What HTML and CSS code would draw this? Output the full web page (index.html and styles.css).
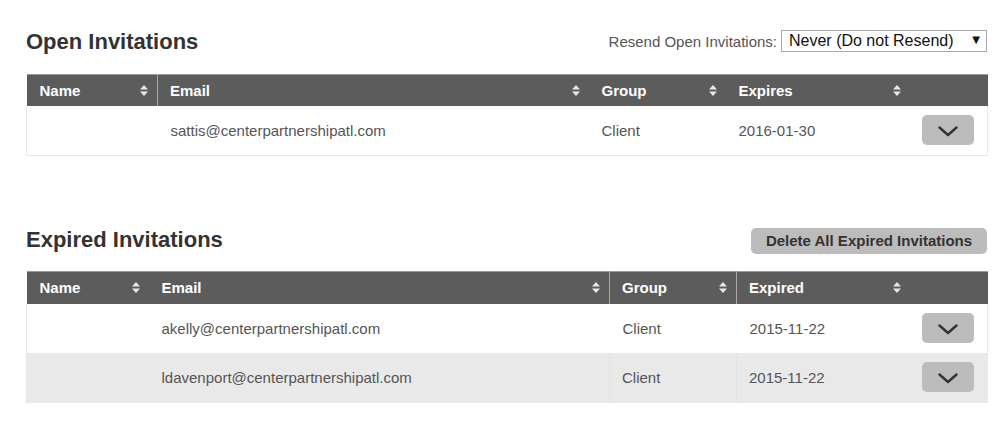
FILE: index.html
```html
<!DOCTYPE html>
<html>
<head>
<meta charset="utf-8">
<link rel="stylesheet" href="styles.css">
</head>
<body>
<div class="page">
  <div class="section-head first">
    <h2 class="title">Open Invitations</h2>
    <div class="resend">
      <label class="resend-label">Resend Open Invitations:</label>
      <span class="select-wrap">
        <select class="select"><option>Never (Do not Resend)</option></select>
        <span class="select-arrow">&#9660;</span>
      </span>
    </div>
  </div>
  <table class="grid open">
    <colgroup><col class="c1"><col class="c2"><col class="c3"><col class="c4"><col class="c5"></colgroup>
    <thead>
      <tr>
        <th><span class="th-in">Name<svg class="sort" viewBox="0 0 8 11"><path d="M4 0 L8 4.5 H0 Z M4 11 L8 6.5 H0 Z" fill="#e8e8e8"/></svg></span></th>
        <th class="sep"><span class="th-in">Email<svg class="sort" viewBox="0 0 8 11"><path d="M4 0 L8 4.5 H0 Z M4 11 L8 6.5 H0 Z" fill="#e8e8e8"/></svg></span></th>
        <th><span class="th-in">Group<svg class="sort" viewBox="0 0 8 11"><path d="M4 0 L8 4.5 H0 Z M4 11 L8 6.5 H0 Z" fill="#e8e8e8"/></svg></span></th>
        <th><span class="th-in">Expires<svg class="sort" viewBox="0 0 8 11"><path d="M4 0 L8 4.5 H0 Z M4 11 L8 6.5 H0 Z" fill="#e8e8e8"/></svg></span></th>
        <th></th>
      </tr>
    </thead>
    <tbody>
      <tr>
        <td></td>
        <td>sattis@centerpartnershipatl.com</td>
        <td>Client</td>
        <td>2016-01-30</td>
        <td class="act"><button class="expand"><svg viewBox="0 0 20 11" class="chev"><path d="M1.5 1.5 L10 9 L18.5 1.5" fill="none" stroke="#333" stroke-width="2.4" stroke-linecap="round" stroke-linejoin="round"/></svg></button></td>
      </tr>
    </tbody>
  </table>

  <div class="section-head second">
    <h2 class="title">Expired Invitations</h2>
    <button class="delete-btn">Delete All Expired Invitations</button>
  </div>
  <table class="grid expired">
    <colgroup><col class="d1"><col class="d2"><col class="d3"><col class="d4"><col class="d5"></colgroup>
    <thead>
      <tr>
        <th><span class="th-in">Name<svg class="sort" viewBox="0 0 8 11"><path d="M4 0 L8 4.5 H0 Z M4 11 L8 6.5 H0 Z" fill="#e8e8e8"/></svg></span></th>
        <th><span class="th-in">Email<svg class="sort" viewBox="0 0 8 11"><path d="M4 0 L8 4.5 H0 Z M4 11 L8 6.5 H0 Z" fill="#e8e8e8"/></svg></span></th>
        <th class="sep"><span class="th-in">Group<svg class="sort" viewBox="0 0 8 11"><path d="M4 0 L8 4.5 H0 Z M4 11 L8 6.5 H0 Z" fill="#e8e8e8"/></svg></span></th>
        <th class="sep"><span class="th-in">Expired<svg class="sort" viewBox="0 0 8 11"><path d="M4 0 L8 4.5 H0 Z M4 11 L8 6.5 H0 Z" fill="#e8e8e8"/></svg></span></th>
        <th></th>
      </tr>
    </thead>
    <tbody>
      <tr>
        <td></td>
        <td>akelly@centerpartnershipatl.com</td>
        <td>Client</td>
        <td>2015-11-22</td>
        <td class="act"><button class="expand"><svg viewBox="0 0 20 11" class="chev"><path d="M1.5 1.5 L10 9 L18.5 1.5" fill="none" stroke="#333" stroke-width="2.4" stroke-linecap="round" stroke-linejoin="round"/></svg></button></td>
      </tr>
      <tr class="alt">
        <td></td>
        <td>ldavenport@centerpartnershipatl.com</td>
        <td class="sep-light">Client</td>
        <td class="sep-light">2015-11-22</td>
        <td class="act"><button class="expand"><svg viewBox="0 0 20 11" class="chev"><path d="M1.5 1.5 L10 9 L18.5 1.5" fill="none" stroke="#333" stroke-width="2.4" stroke-linecap="round" stroke-linejoin="round"/></svg></button></td>
      </tr>
    </tbody>
  </table>
</div>
</body>
</html>
```

FILE: styles.css
```css
* { box-sizing: border-box; }
html, body {
  margin: 0;
  padding: 0;
  background: #fff;
}
body {
  font-family: "Liberation Sans", Arial, Helvetica, sans-serif;
  color: #555;
  font-size: 15px;
}
.page {
  width: 961px;
  margin-left: 26px;
  padding-top: 30px;
}
.section-head {
  display: flex;
  justify-content: space-between;
  align-items: center;
}
.section-head.first {
  height: 22px;
  margin-bottom: 22px;
}
.section-head.second {
  height: 26px;
  margin-top: 71px;
  margin-bottom: 18px;
}
.title {
  margin: 0;
  font-family: "Liberation Sans", Arial, Helvetica, sans-serif;
  font-size: 22px;
  font-weight: bold;
  color: #333;
  line-height: 22px;
}
.section-head.first .title { padding-top: 2px; }
.resend {
  display: flex;
  align-items: center;
  gap: 4px;
}
.resend-label {
  font-size: 15px;
  color: #555;
}
.select-wrap {
  position: relative;
  display: inline-block;
}
.select {
  -webkit-appearance: none;
  appearance: none;
  width: 206px;
  height: 22px;
  border: 1px solid #a9a9a9;
  border-radius: 0;
  background: #fff;
  font-family: "Liberation Sans", Arial, Helvetica, sans-serif;
  font-size: 16px;
  color: #111;
  padding: 0 0 0 7px;
  line-height: 20px;
  margin: 0;
}
.select-arrow {
  position: absolute;
  right: 7px;
  top: 5px;
  font-family: "DejaVu Sans", sans-serif;
  font-size: 10px;
  color: #111;
  line-height: 10px;
  pointer-events: none;
}
.delete-btn {
  height: 26px;
  width: 236px;
  border: none;
  border-radius: 5px;
  background: #bcbcbc;
  color: #333;
  font-family: "Liberation Sans", Arial, Helvetica, sans-serif;
  font-weight: bold;
  font-size: 15px;
  padding: 0;
  margin-top: 1px;
}
.grid {
  width: 961px;
  border-collapse: collapse;
  table-layout: fixed;
}
.c1 { width: 131px; }
.c2 { width: 431px; }
.c3 { width: 137px; }
.c4 { width: 184px; }
.c5 { width: 78px; }
.d1 { width: 122px; }
.d2 { width: 461px; }
.d3 { width: 127px; }
.d4 { width: 173px; }
.d5 { width: 78px; }
.grid thead tr {
  background: #5c5c5c;
  border-top: 1px solid #9a9a9a;
}
.grid th {
  height: 31px;
  padding: 0 9px 0 13px;
  text-align: left;
  color: #fff;
  font-weight: bold;
  font-size: 15px;
}
.grid th.sep { border-left: 1px solid #a8a8a8; padding-left: 12px; }
.expired th { height: 32px; }
.th-in {
  display: flex;
  justify-content: space-between;
  align-items: center;
}
.sort {
  width: 8px;
  height: 11px;
  display: block;
}
.grid tbody {
  border-left: 1px solid #e8e8e8;
  border-right: 1px solid #e8e8e8;
  border-bottom: 1px solid #e8e8e8;
}
.grid td {
  height: 50px;
  padding: 0 9px 0 13px;
  color: #555;
  font-size: 15px;
}
.expired tbody tr:first-child td { height: 49px; }
.grid tr.alt td { background: #e9e9e9; }
.grid td.sep-light { border-left: 1px solid #e3e3e3; padding-left: 12px; }
.grid td.act {
  padding: 0 13px 0 0;
  text-align: right;
}
.expand {
  width: 52px;
  height: 30px;
  border: none;
  border-radius: 5px;
  background: #bcbcbc;
  padding: 0;
  display: inline-flex;
  align-items: center;
  justify-content: center;
  vertical-align: middle;
}
.chev {
  width: 20px;
  height: 11px;
  display: block;
  margin-top: 2px;
}
```
